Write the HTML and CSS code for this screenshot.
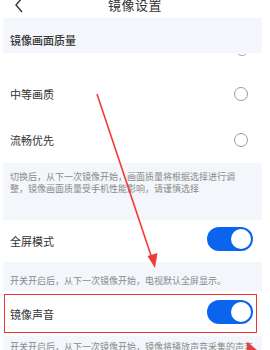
FILE: index.html
```html
<!DOCTYPE html>
<html lang="zh">
<head>
<meta charset="utf-8">
<link rel="stylesheet" href="styles.css">
</head>
<body>
<div class="page">
  <header class="header">
    <svg class="back" width="10" height="14" viewBox="0 0 10 14"><polyline points="8,-2 2,5 8,12" fill="none" stroke="#333" stroke-width="1.4"/></svg>
    <div class="title">镜像设置</div>
  </header>
  <div class="content">
    <div class="band band-head">镜像画面质量</div>
    <div class="group">
      <div class="row radio-row"><span class="label">中等画质</span><span class="radio"></span></div>
      <div class="row radio-row"><span class="label">流畅优先</span><span class="radio"></span></div>
    </div>
    <div class="band desc desc-two">切换后，从下一次镜像开始，画面质量将根据选择进行调整，镜像画面质量受手机性能影响，请谨慎选择</div>
    <div class="row switch-row row-full"><span class="label">全屏模式</span><span class="toggle"><span class="knob"></span></span></div>
    <div class="band desc desc-one">开关开启后，从下一次镜像开始，电视默认全屏显示。</div>
    <div class="row switch-row row-sound"><span class="label">镜像声音</span><span class="toggle"><span class="knob"></span></span><span class="highlight"></span></div>
    <div class="band desc desc-last">开关开启后，从下一次镜像开始，镜像将播放声音采集的声音</div>
  </div>
  <svg class="annot" width="270" height="350" viewBox="0 0 270 350">
    <path d="M238 54 Q242 57.5 246 54" fill="none" stroke="#aaa" stroke-width="1"/>
    <line x1="97" y1="94" x2="152.5" y2="260" stroke="#f03a3a" stroke-width="1.6"/>
    <polygon points="155,268 147.5,256 157.5,253" fill="#f03a3a"/>
    <polygon points="247,342 257,350 247,350" fill="#f03a3a"/>
  </svg>
</div>
</body>
</html>
```

FILE: styles.css
```css
* { box-sizing: border-box; }
html, body { margin: 0; padding: 0; }
body {
  background: #ffffff;
  font-family: "Noto Sans CJK SC", "Noto Sans", sans-serif;
  color: #333;
  width: 270px;
  height: 350px;
  overflow: hidden;
}
.page { position: relative; width: 270px; height: 350px; overflow: hidden; }
.header {
  height: 18px;
  display: flex;
  align-items: flex-start;
  justify-content: center;
  position: relative;
}
.back { position: absolute; left: 14px; top: 0; }
.title {
  font-size: 13px;
  line-height: 10px;
  color: #333;
  letter-spacing: 0.5px;
}
.content { margin: 0 8px 0 3px; }
.band { background: #f3f6fa; }
.band-head {
  height: 35px;
  padding: 16px 7px 0;
  font-size: 11px;
  line-height: 12px;
  color: #333;
  font-weight: 500;
}
.group { padding-top: 18px; }
.row {
  display: flex;
  align-items: center;
  justify-content: space-between;
  padding: 0 7px;
  position: relative;
}
.radio-row { height: 46px; padding-right: 14px; }
.label { font-size: 11px; line-height: 12px; color: #333; }
.radio {
  width: 14px; height: 14px;
  border: 1.3px solid #9a9a9a;
  border-radius: 50%;
}
.desc {
  font-size: 9px;
  color: #8a8a8a;
  padding: 0 7px;
}
.desc-two { height: 57px; padding: 8px 22px 0 7px; line-height: 11.5px; }
.desc-one { height: 29px; padding-top: 13px; line-height: 12px; }
.desc-last { height: 30px; padding-top: 5px; line-height: 12px; white-space: nowrap; overflow: hidden; }
.switch-row { padding-right: 9px; }
.row-full { height: 42px; }
.row-sound { height: 45px; }
.toggle {
  width: 46px; height: 24px;
  background: #0b64ee;
  border-radius: 12px;
  display: flex;
  align-items: center;
  justify-content: flex-end;
  padding-right: 2px;
}
.row-sound .toggle { margin-top: -4px; }
.row-full .toggle { margin-top: -4px; }
.knob { width: 20px; height: 20px; border-radius: 50%; background: #fff; }
.highlight {
  position: absolute;
  left: 1px; top: 3px;
  width: 253px; height: 39px;
  border: 1.5px solid #ee3434;
}
.annot { position: absolute; left: 0; top: 0; pointer-events: none; }
```
